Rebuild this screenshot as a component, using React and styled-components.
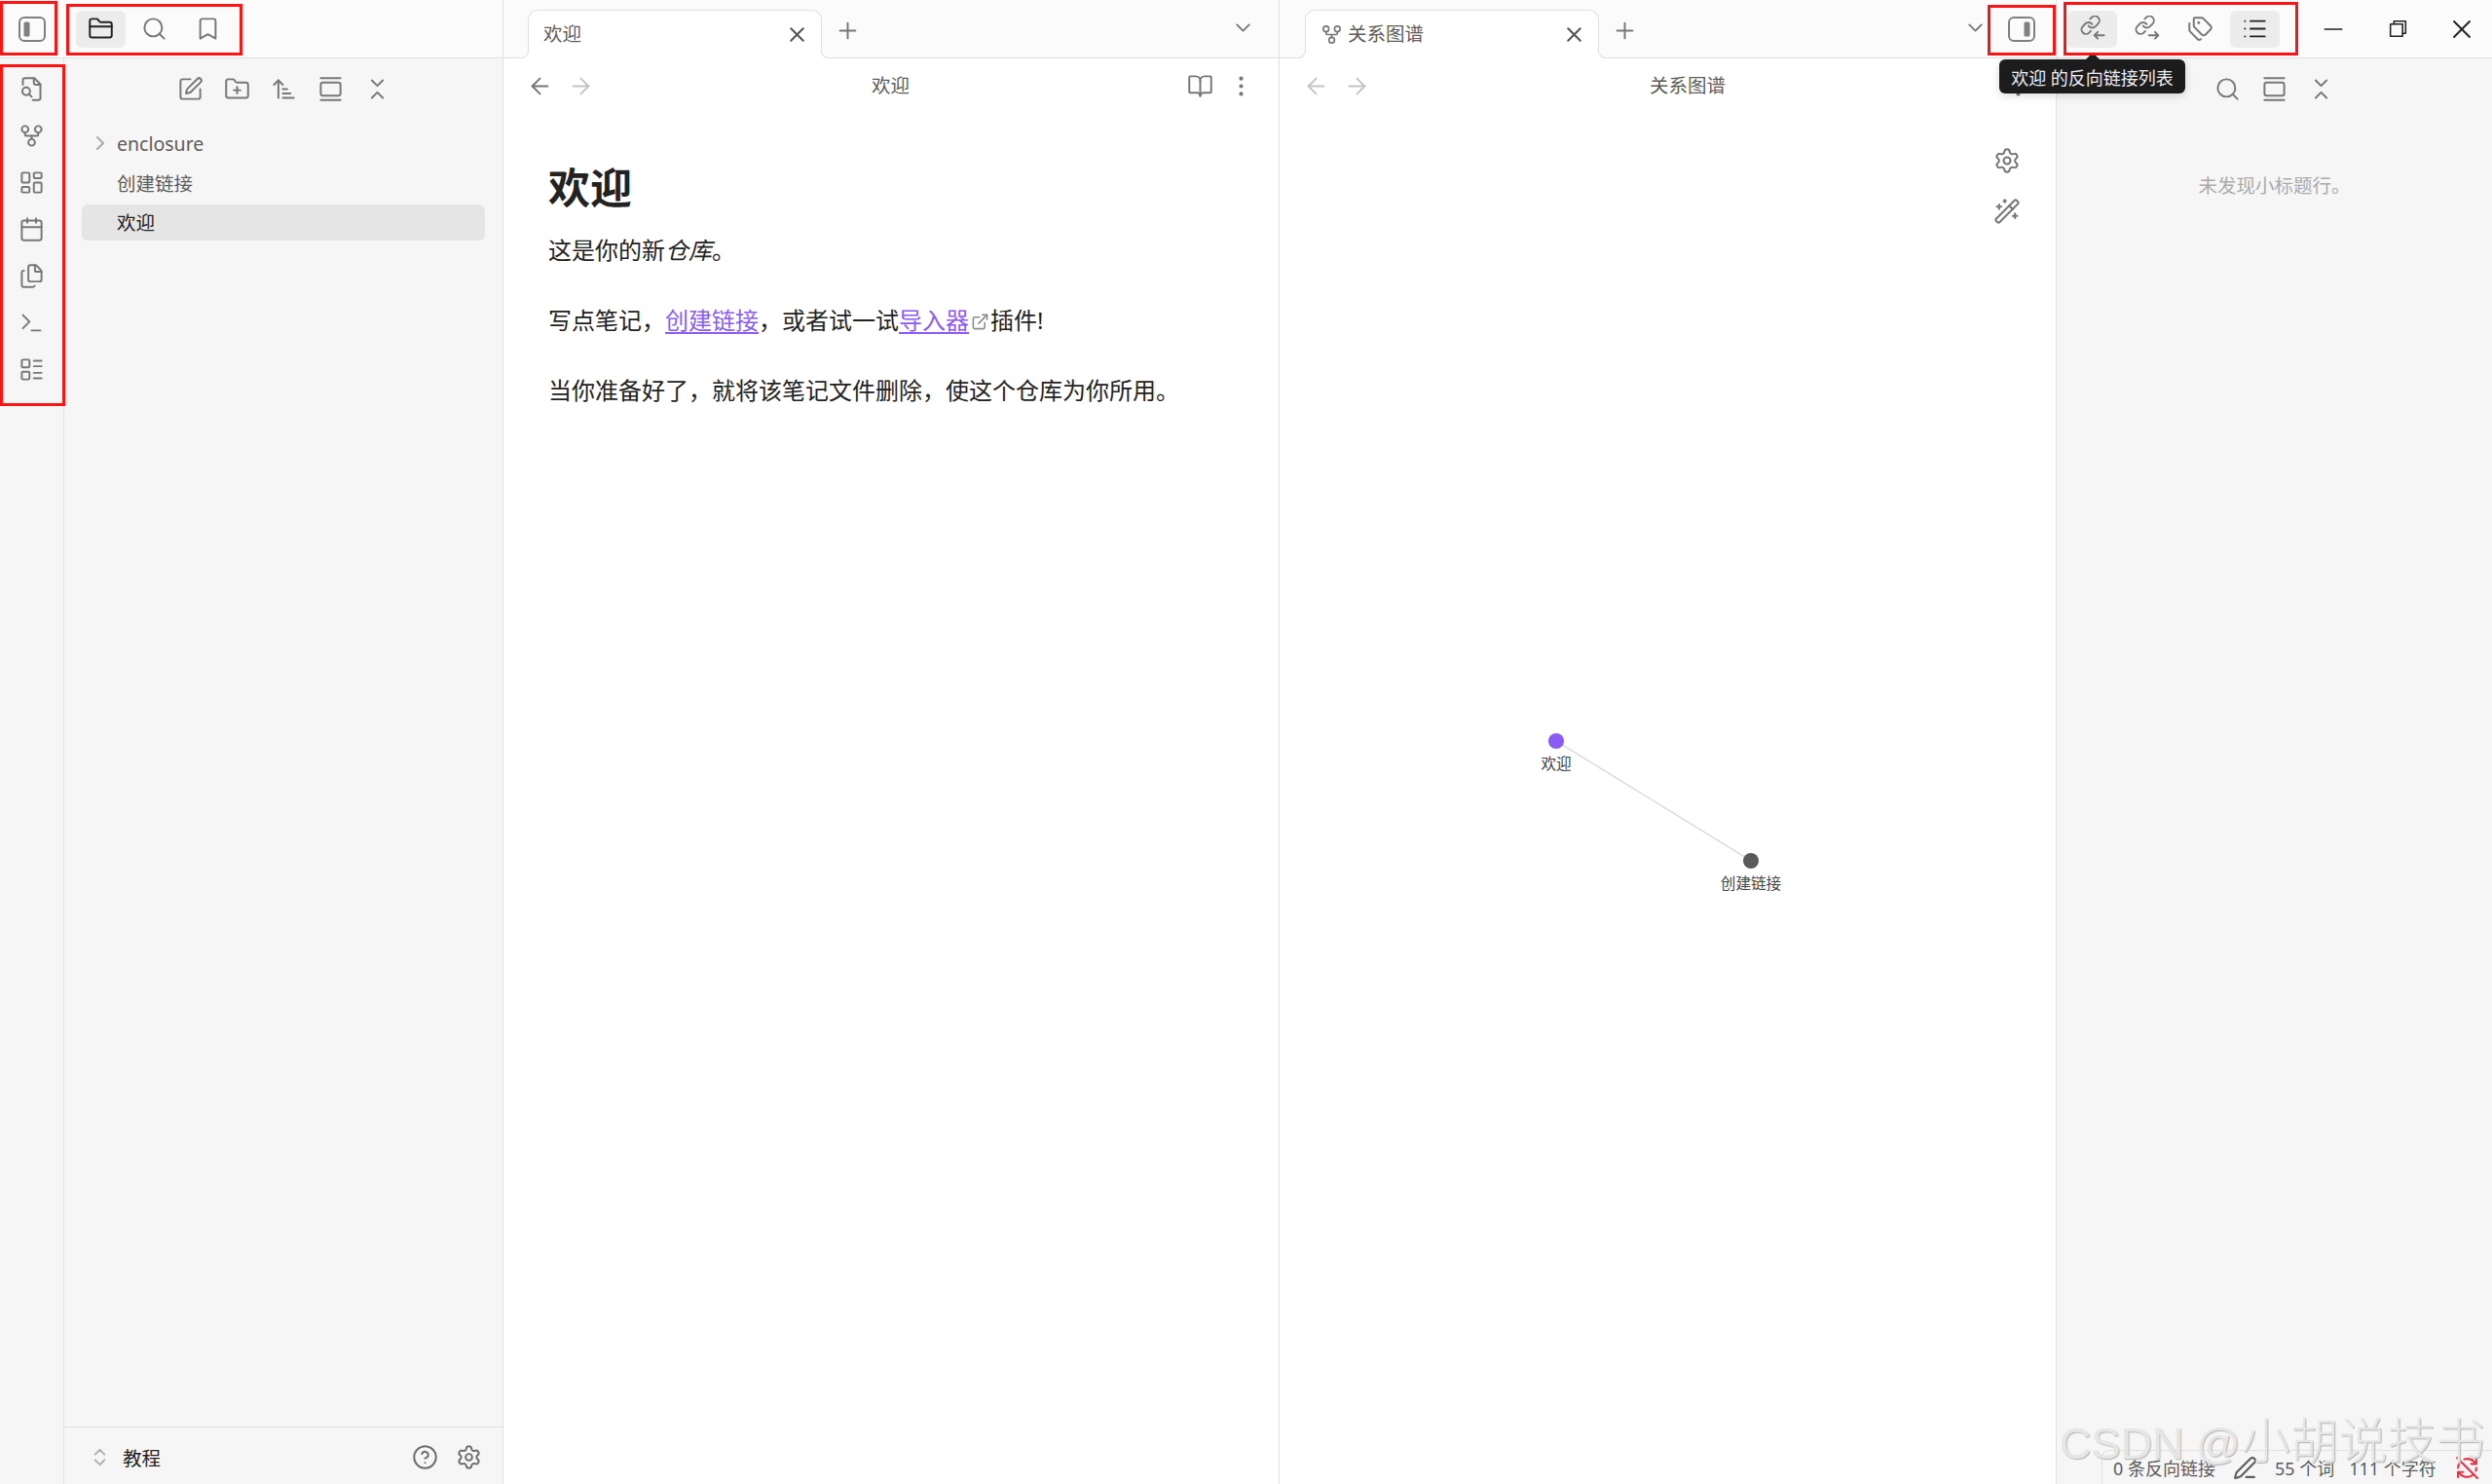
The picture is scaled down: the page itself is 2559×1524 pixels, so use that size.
import React from "react";
import styled, { createGlobalStyle } from "styled-components";
import {
  ArrowLeft, ArrowRight, ArrowUpNarrowWide, Bookmark, BookOpen, Calendar, ChevronDown, ChevronRight,
  ChevronsDownUp, ChevronsUpDown, CircleHelp, EllipsisVertical, ExternalLink, Files,
  FolderClosed, FolderPlus, GalleryVertical, GitFork, LayoutDashboard, LayoutList, List, Minus,
  PenLine, Plus, RefreshCwOff, Search, Settings, SquarePen, Tags, Terminal, WandSparkles, X,
} from "lucide-react";

const Global = createGlobalStyle`
  html, body, #root { height: 100%; }
  body {
    margin: 0;
    overflow: hidden;
    background: #fff;
    color: #222;
    font-family: "Noto Sans", "Noto Sans CJK SC", sans-serif;
  }
`;

const line = "#e0e0e0";

const Shell = styled.div`
  position: relative;
  display: flex;
  width: 2559px;
  height: 1524px;
  overflow: hidden;
`;
const LeftColumn = styled.div`
  width: 517px;
  flex: none;
  display: flex;
  flex-direction: column;
  border-right: 1px solid ${line};
  box-sizing: border-box;
`;
const Pane = styled.div`
  width: ${(p) => p.$width}px;
  flex: none;
  display: flex;
  flex-direction: column;
  border-right: 1px solid ${line};
  box-sizing: border-box;
`;
const RightColumn = styled.div`
  flex: 1;
  display: flex;
  flex-direction: column;
  background: #f6f6f6;
`;
const Header = styled.div`
  height: 60px;
  flex: none;
  display: flex;
  align-items: center;
  box-sizing: border-box;
  background: #fbfbfb;
  border-bottom: 1px solid ${line};
  padding-left: ${(p) => p.$pad || 0}px;
`;
const RibbonCell = styled.div`
  width: 66px;
  display: flex;
  justify-content: center;
  margin-right: 12px;
`;
const HeaderTabs = styled.div`
  display: flex;
  gap: 4px;
`;
const HeaderButton = styled.div`
  width: 51px;
  height: 38px;
  display: flex;
  align-items: center;
  justify-content: center;
  border-radius: 6px;
  background: ${(p) => (p.$active ? "#ececec" : "transparent")};
  color: ${(p) => (p.$dark ? "#222" : "#777")};
  svg { width: 27px; height: 27px; stroke-width: 1.75; }
`;
const Body = styled.div`
  flex: 1;
  display: flex;
  min-height: 0;
`;
const Ribbon = styled.div`
  width: 66px;
  flex: none;
  box-sizing: border-box;
  padding-top: 7px;
  background: #f6f6f6;
  border-right: 1px solid ${line};
  display: flex;
  flex-direction: column;
  align-items: center;
`;
const RibbonButton = styled.div`
  width: 48px;
  height: 48px;
  display: flex;
  align-items: center;
  justify-content: center;
  color: #777;
  svg { width: 27px; height: 27px; stroke-width: 1.75; }
`;
const Sidebar = styled.div`
  flex: 1;
  display: flex;
  flex-direction: column;
  background: #f6f6f6;
`;
const NavIcons = styled.div`
  display: flex;
  justify-content: center;
  padding-top: 7px;
`;
const NavIcon = styled.div`
  width: 48px;
  height: 48px;
  display: flex;
  align-items: center;
  justify-content: center;
  color: #777;
  svg { width: 27px; height: 27px; stroke-width: 1.75; }
`;
const Tree = styled.div`
  flex: 1;
  padding: 15px 18px 0 18px;
  display: flex;
  flex-direction: column;
  gap: 3px;
`;
const TreeRow = styled.div`
  height: 37px;
  display: flex;
  align-items: center;
  box-sizing: border-box;
  padding-left: ${(p) => (p.$folder ? 4 : 36)}px;
  padding-bottom: 3px;
  border-radius: 6px;
  font-size: 19.5px;
  color: ${(p) => (p.$active ? "#222" : "#5c5c5c")};
  background: ${(p) => (p.$active ? "#e5e5e5" : "transparent")};
`;
const Caret = styled.span`
  width: 29px;
  margin-left: 3px;
  display: flex;
  color: #ababab;
  svg { width: 24px; height: 24px; stroke-width: 2; }
`;
const VaultBar = styled.div`
  height: 59px;
  flex: none;
  box-sizing: border-box;
  border-top: 1px solid ${line};
  display: flex;
  align-items: center;
  padding: 2px 21px 0 25px;
  font-size: 19.5px;
  color: #222;
`;
const VaultChevrons = styled.span`
  display: flex;
  color: #ababab;
  margin-right: 12px;
  svg { width: 23px; height: 23px; stroke-width: 2; }
`;
const VaultName = styled.span`
  flex: 1;
`;
const VaultTools = styled.div`
  display: flex;
  gap: 18px;
  color: #6e6e6e;
  svg { width: 27px; height: 27px; stroke-width: 1.75; display: block; }
`;
const Tab = styled.div`
  position: relative;
  width: 302px;
  height: 50px;
  margin-top: 10px;
  margin-bottom: -1px;
  box-sizing: border-box;
  padding: 0 12px 0 15px;
  display: flex;
  align-items: center;
  align-self: flex-start;
  background: #fff;
  border: 1px solid ${line};
  border-bottom: none;
  border-radius: 10px 10px 0 0;
  font-size: 19.5px;
  color: #5c5c5c;
  &::before, &::after {
    content: "";
    position: absolute;
    bottom: 0;
    width: 8px;
    height: 8px;
    border-bottom: 1px solid ${line};
  }
  &::before {
    left: -9px;
    border-right: 1px solid ${line};
    border-bottom-right-radius: 8px;
    box-shadow: 3px 3px 0 #fff;
  }
  &::after {
    right: -9px;
    border-left: 1px solid ${line};
    border-bottom-left-radius: 8px;
    box-shadow: -3px 3px 0 #fff;
  }
`;
const TabGlyph = styled.span`
  display: flex;
  margin-right: 5px;
  color: #777;
  svg { width: 23px; height: 23px; stroke-width: 1.75; }
`;
const TabTitle = styled.span`
  flex: 1;
  margin-top: -4px;
`;
const TabClose = styled.span`
  display: flex;
  color: #555;
  svg { width: 25px; height: 25px; stroke-width: 2; }
`;
const TabAdd = styled.span`
  display: flex;
  margin-left: 13px;
  margin-top: 4px;
  color: #777;
  svg { width: 27px; height: 27px; stroke-width: 1.75; }
`;
const TabMenu = styled.span`
  display: flex;
  margin-left: auto;
  margin-right: ${(p) => p.$right}px;
  margin-top: -3px;
  color: #777;
  svg { width: 25px; height: 25px; stroke-width: 1.75; }
`;
const ToggleRight = styled.span`
  display: flex;
  margin: 0 21px;
`;
const PanelSvg = styled.svg`
  width: 28px;
  height: 28px;
  color: #808080;
`;
const NavBar = styled.div`
  height: 56px;
  flex: none;
  display: flex;
  align-items: center;
  padding: 0 25px 0 24px;
  color: #777;
  svg { width: 27px; height: 27px; stroke-width: 1.75; display: block; }
`;
const NavArrows = styled.div`
  display: flex;
  gap: 15px;
`;
const NavArrow = styled.span`
  color: ${(p) => (p.$faded ? "#c4c4c4" : "#777")};
`;
const NavTitle = styled.div`
  flex: 1;
  text-align: center;
  font-size: 19.5px;
  color: #5c5c5c;
  margin-top: -3px;
`;
const NavActions = styled.div`
  display: flex;
  gap: 15px;
`;
const Note = styled.div`
  padding: 51px 46px 0;
  color: #222;
`;
const Heading = styled.h1`
  margin: 0 0 20px;
  font-size: 43px;
  line-height: 52px;
  font-weight: 700;
`;
const Para = styled.p`
  margin: 0 0 36px;
  font-size: 24px;
  line-height: 36px;
`;
const NoteLink = styled.a`
  color: #8a5cf5;
  text-decoration: underline;
  text-underline-offset: 3px;
`;
const ExternalMark = styled.span`
  color: #8c8c8c;
  svg { width: 19px; height: 19px; stroke-width: 2; margin: 0 1px 0 2px; vertical-align: -2px; }
`;
const GraphCanvas = styled.div`
  position: relative;
  flex: 1;
`;
const GraphDrawing = styled.svg`
  position: absolute;
  inset: 0;
  width: 100%;
  height: 100%;
`;
const GraphLabel = styled.text`
  font-size: 15.6px;
  fill: #444;
  text-anchor: middle;
  dominant-baseline: middle;
`;
const GraphControls = styled.div`
  position: absolute;
  top: 35px;
  right: 36px;
  display: flex;
  flex-direction: column;
  gap: 24px;
  color: #777;
  svg { width: 28px; height: 28px; stroke-width: 1.75; display: block; }
`;
const WindowButton = styled.div`
  width: 66px;
  height: 58px;
  flex: none;
  display: flex;
  align-items: center;
  justify-content: center;
  color: #222;
  svg { width: ${(p) => p.$size || 30}px; height: ${(p) => p.$size || 30}px; }
`;
const WindowControls = styled.div`
  margin-left: auto;
  margin-right: -2px;
  display: flex;
`;
const RightTabs = styled.div`
  display: flex;
  gap: 4.5px;
`;
const EmptyOutline = styled.div`
  margin-top: 61px;
  text-align: center;
  font-size: 19.5px;
  line-height: 30px;
  color: #ababab;
`;
const StatusBar = styled.div`
  position: absolute;
  right: 0;
  bottom: 0;
  width: 401px;
  height: 35px;
  box-sizing: border-box;
  display: flex;
  align-items: center;
  padding-left: 11px;
  background: #f6f6f6;
  border-left: 1px solid ${line};
  border-top: 1px solid ${line};
  border-top-left-radius: 8px;
  font-size: 18px;
  color: #5c5c5c;
  white-space: nowrap;
`;
const StatusIcon = styled.span`
  display: flex;
  margin: 0 ${(p) => p.$after}px 0 ${(p) => p.$before}px;
  color: ${(p) => (p.$alert ? "#e93147" : "#5c5c5c")};
  svg { width: 25px; height: 25px; stroke-width: 2; }
`;
const StatusText = styled.span`
  margin-right: ${(p) => p.$after || 0}px;
`;
const Tooltip = styled.div`
  position: absolute;
  left: 2053px;
  top: 61px;
  width: 191px;
  height: 35px;
  display: flex;
  align-items: center;
  justify-content: center;
  white-space: nowrap;
  border-radius: 6px;
  background: #1c1c1c;
  color: #eee;
  font-size: 18px;
  box-shadow: 0 2px 10px rgba(0, 0, 0, 0.15);
  &::before {
    content: "";
    position: absolute;
    top: -7px;
    left: 89px;
    border-left: 7px solid transparent;
    border-right: 7px solid transparent;
    border-bottom: 7px solid #1c1c1c;
  }
`;
const RedBox = styled.div`
  position: absolute;
  left: ${(p) => p.$x}px;
  top: ${(p) => p.$y}px;
  width: ${(p) => p.$w}px;
  height: ${(p) => p.$h}px;
  box-sizing: border-box;
  border: 3px solid #fb1414;
  pointer-events: none;
`;
const Watermark = styled.div`
  position: absolute;
  left: 2115px;
  top: 1440px;
  display: flex;
  align-items: baseline;
  white-space: nowrap;
  color: #e6e6e6;
  text-shadow: 1px 1px 1px #b4b4b4;
  pointer-events: none;
  font-family: "Liberation Sans", "Noto Sans CJK SC", sans-serif;
  font-size: 45px;
`;
const WatermarkHan = styled.span`
  font-size: 50px;
  margin-left: 1px;
  font-family: "Noto Sans CJK SC", sans-serif;
  font-weight: 300;
`;

const Glyph = styled.svg.attrs({
  viewBox: "0 0 24 24",
  fill: "none",
  stroke: "currentColor",
  strokeLinecap: "round",
  strokeLinejoin: "round",
})``;

function PanelToggle({ side }) {
  return (
    <PanelSvg viewBox="0 0 28 28" fill="none">
      <rect x="1" y="2" width="26" height="24" rx="5" stroke="currentColor" strokeWidth="2" />
      <rect x={side === "left" ? 5.5 : 16.5} y="6.5" width="6" height="15" rx="1.5" fill="currentColor" />
    </PanelSvg>
  );
}

function QuickSwitch() {
  return (
    <Glyph>
      <path d="M4 8V4a2 2 0 0 1 2-2h8.5L20 7.5V20a2 2 0 0 1-2 2h-5" />
      <path d="M14 2v4a2 2 0 0 0 2 2h4" />
      <circle cx="7" cy="14" r="3.5" />
      <path d="m9.7 16.7 2.3 2.3" />
    </Glyph>
  );
}

const chain = (
  <g transform="translate(0.5 -1.2) scale(0.82)" strokeWidth="2.1">
    <path d="M10 13a5 5 0 0 0 7.54.54l3-3a5 5 0 0 0-7.07-7.07l-1.72 1.71" />
    <path d="M14 11a5 5 0 0 0-7.54-.54l-3 3a5 5 0 0 0 7.07 7.07l1.71-1.71" />
  </g>
);

function LinksIn() {
  return (
    <Glyph>
      {chain}
      <path d="M22.7 18h-8.5M17 15l-3 3 3 3" />
    </Glyph>
  );
}

function LinksOut() {
  return (
    <Glyph>
      {chain}
      <path d="M14 18h8.5M19.5 15l3 3-3 3" />
    </Glyph>
  );
}

function Restore() {
  return (
    <Glyph strokeWidth="1.5">
      <rect x="4.5" y="7.5" width="12" height="12" />
      <path d="M8 7.5V4.5h11.5v12h-3" />
    </Glyph>
  );
}

const ribbonIcons = [QuickSwitch, GitFork, LayoutDashboard, Calendar, Files, Terminal, LayoutList];
const fileNavIcons = [SquarePen, FolderPlus, ArrowUpNarrowWide, GalleryVertical, ChevronsDownUp];
const annotations = [
  [0, 1, 59, 56],
  [68, 4, 181, 53],
  [0, 66, 67, 351],
  [2041, 5, 70, 52],
  [2119, 2, 241, 55],
];

export default function App() {
  return (
    <Shell>
      <Global />
      <LeftColumn>
        <Header>
          <RibbonCell><PanelToggle side="left" /></RibbonCell>
          <HeaderTabs>
            <HeaderButton $active $dark><FolderClosed /></HeaderButton>
            <HeaderButton><Search /></HeaderButton>
            <HeaderButton><Bookmark /></HeaderButton>
          </HeaderTabs>
        </Header>
        <Body>
          <Ribbon>
            {ribbonIcons.map((Icon, i) => (
              <RibbonButton key={i}><Icon /></RibbonButton>
            ))}
          </Ribbon>
          <Sidebar>
            <NavIcons>
              {fileNavIcons.map((Icon, i) => (
                <NavIcon key={i}><Icon /></NavIcon>
              ))}
            </NavIcons>
            <Tree>
              <TreeRow $folder><Caret><ChevronRight /></Caret>enclosure</TreeRow>
              <TreeRow>创建链接</TreeRow>
              <TreeRow $active>欢迎</TreeRow>
            </Tree>
            <VaultBar>
              <VaultChevrons><ChevronsUpDown /></VaultChevrons>
              <VaultName>教程</VaultName>
              <VaultTools><CircleHelp /><Settings /></VaultTools>
            </VaultBar>
          </Sidebar>
        </Body>
      </LeftColumn>

      <Pane $width={797}>
        <Header $pad={25}>
          <Tab>
            <TabTitle>欢迎</TabTitle>
            <TabClose><X /></TabClose>
          </Tab>
          <TabAdd><Plus /></TabAdd>
          <TabMenu $right={24}><ChevronDown /></TabMenu>
        </Header>
        <NavBar>
          <NavArrows>
            <NavArrow><ArrowLeft /></NavArrow>
            <NavArrow $faded><ArrowRight /></NavArrow>
          </NavArrows>
          <NavTitle>欢迎</NavTitle>
          <NavActions><BookOpen /><EllipsisVertical /></NavActions>
        </NavBar>
        <Note>
          <Heading>欢迎</Heading>
          <Para>这是你的新<em>仓库</em>。</Para>
          <Para>
            写点笔记，<NoteLink>创建链接</NoteLink>，或者试一试<NoteLink>导入器</NoteLink>
            <ExternalMark><ExternalLink /></ExternalMark>插件!
          </Para>
          <Para>当你准备好了，就将该笔记文件删除，使这个仓库为你所用。</Para>
        </Note>
      </Pane>

      <Pane $width={798}>
        <Header $pad={26}>
          <Tab>
            <TabGlyph><GitFork /></TabGlyph>
            <TabTitle>关系图谱</TabTitle>
            <TabClose><X /></TabClose>
          </Tab>
          <TabAdd><Plus /></TabAdd>
          <TabMenu $right={0}><ChevronDown /></TabMenu>
          <ToggleRight><PanelToggle side="right" /></ToggleRight>
        </Header>
        <NavBar>
          <NavArrows>
            <NavArrow $faded><ArrowLeft /></NavArrow>
            <NavArrow $faded><ArrowRight /></NavArrow>
          </NavArrows>
          <NavTitle>关系图谱</NavTitle>
          <NavActions><EllipsisVertical /></NavActions>
        </NavBar>
        <GraphCanvas>
          <GraphDrawing>
            <line x1="284" y1="645" x2="484" y2="768" stroke="#dcdcdc" strokeWidth="1.5" />
            <circle cx="284" cy="645" r="8" fill="#8a5cf5" />
            <circle cx="484" cy="768" r="8" fill="#5a5a5a" />
            <GraphLabel x="284" y="670">欢迎</GraphLabel>
            <GraphLabel x="484" y="793">创建链接</GraphLabel>
          </GraphDrawing>
          <GraphControls><Settings /><WandSparkles /></GraphControls>
        </GraphCanvas>
      </Pane>

      <RightColumn>
        <Header $pad={11}>
          <RightTabs>
            <HeaderButton $active><LinksIn /></HeaderButton>
            <HeaderButton><LinksOut /></HeaderButton>
            <HeaderButton><Tags /></HeaderButton>
            <HeaderButton $active $dark><List /></HeaderButton>
          </RightTabs>
          <WindowControls>
            <WindowButton><Minus strokeWidth={1.3} /></WindowButton>
            <WindowButton $size={25}><Restore /></WindowButton>
            <WindowButton $size={32}><X strokeWidth={1.4} /></WindowButton>
          </WindowControls>
        </Header>
        <NavIcons>
          <NavIcon><Search /></NavIcon>
          <NavIcon><GalleryVertical /></NavIcon>
          <NavIcon><ChevronsDownUp /></NavIcon>
        </NavIcons>
        <EmptyOutline>未发现小标题行。</EmptyOutline>
      </RightColumn>

      <Tooltip>欢迎 的反向链接列表</Tooltip>
      <StatusBar>
        <StatusText>0 条反向链接</StatusText>
        <StatusIcon $before={18} $after={18}><PenLine /></StatusIcon>
        <StatusText $after={15}>55 个词</StatusText>
        <StatusText>111 个字符</StatusText>
        <StatusIcon $before={19} $after={0} $alert><RefreshCwOff /></StatusIcon>
      </StatusBar>
      <Watermark>CSDN @<WatermarkHan>小胡说技书</WatermarkHan></Watermark>
      {annotations.map(([x, y, w, h], i) => (
        <RedBox key={i} $x={x} $y={y} $w={w} $h={h} />
      ))}
    </Shell>
  );
}
